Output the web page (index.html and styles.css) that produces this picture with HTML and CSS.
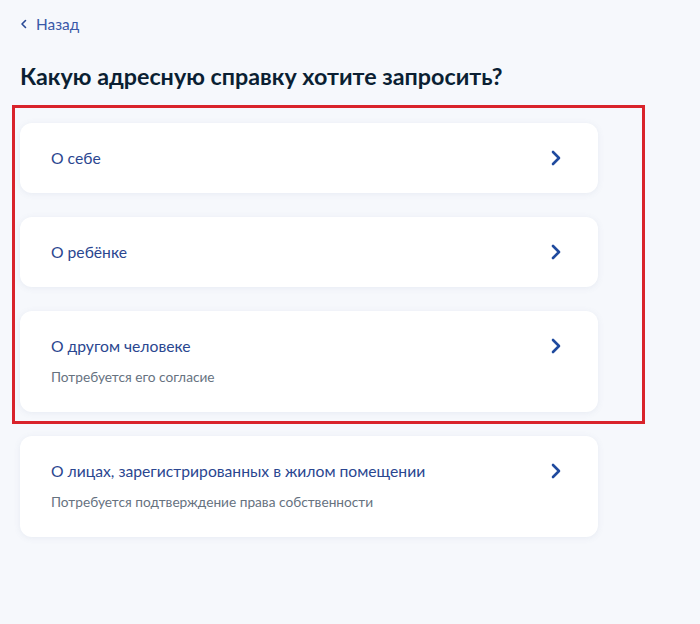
FILE: index.html
```html
<!DOCTYPE html>
<html lang="ru">
<head>
<meta charset="utf-8">
<link rel="stylesheet" href="styles.css">
</head>
<body>
<div class="page">
  <a class="back" href="#">
    <svg class="back-icon" width="8" height="10" viewBox="0 0 8 10"><path d="M5.5 1.5 L2 5 L5.5 8.5" fill="none" stroke="#2a4a96" stroke-width="1.6" stroke-linecap="round" stroke-linejoin="round"/></svg>
    <span>Назад</span>
  </a>
  <h1 class="title">Какую адресную справку хотите запросить?</h1>
  <div class="list">
    <div class="card">
      <div class="card-text"><div class="card-title">О себе</div></div>
      <svg class="chev" width="12" height="16" viewBox="0 0 12 16"><path d="M3 2 L9 8 L3 14" fill="none" stroke="#1f4a9e" stroke-width="2.6" stroke-linecap="round" stroke-linejoin="round"/></svg>
    </div>
    <div class="card">
      <div class="card-text"><div class="card-title">О ребёнке</div></div>
      <svg class="chev" width="12" height="16" viewBox="0 0 12 16"><path d="M3 2 L9 8 L3 14" fill="none" stroke="#1f4a9e" stroke-width="2.6" stroke-linecap="round" stroke-linejoin="round"/></svg>
    </div>
    <div class="card">
      <div class="card-text"><div class="card-title">О другом человеке</div><div class="card-sub">Потребуется его согласие</div></div>
      <svg class="chev" width="12" height="16" viewBox="0 0 12 16"><path d="M3 2 L9 8 L3 14" fill="none" stroke="#1f4a9e" stroke-width="2.6" stroke-linecap="round" stroke-linejoin="round"/></svg>
    </div>
    <div class="card">
      <div class="card-text"><div class="card-title">О лицах, зарегистрированных в жилом помещении</div><div class="card-sub">Потребуется подтверждение права собственности</div></div>
      <svg class="chev" width="12" height="16" viewBox="0 0 12 16"><path d="M3 2 L9 8 L3 14" fill="none" stroke="#1f4a9e" stroke-width="2.6" stroke-linecap="round" stroke-linejoin="round"/></svg>
    </div>
    <div class="highlight"></div>
  </div>
</div>
</body>
</html>
```
FILE: styles.css
```css
html, body {
  margin: 0;
  padding: 0;
}
body {
  background: #f6f8fc;
  font-family: Lato, "Noto Sans", sans-serif;
  width: 700px;
  height: 624px;
  overflow: hidden;
}
.page {
  padding: 14px 0 0 20px;
  width: 578px;
}
.back {
  display: inline-flex;
  align-items: center;
  gap: 8px;
  color: #3a58a8;
  text-decoration: none;
  font-size: 15.4px;
  line-height: 20px;
  margin-left: 0;
  position: relative;
  top: -1px;
}
.title {
  margin: 26px 0 0 0;
  font-size: 23.3px;
  line-height: 30px;
  font-weight: 700;
  color: #0b1f33;
}
.list {
  position: relative;
  margin-top: 32px;
  display: flex;
  flex-direction: column;
  gap: 24px;
}
.card {
  background: #ffffff;
  border-radius: 12px;
  box-shadow: 0 1px 6px rgba(100, 120, 160, 0.10);
  padding: 24px 36px 24px 31px;
  display: flex;
  align-items: flex-start;
  justify-content: space-between;
}
.card-title {
  font-size: 15.7px;
  line-height: 22px;
  color: #2a4690;
}
.card-sub {
  margin-top: 10px;
  margin-bottom: 1px;
  font-size: 13.7px;
  line-height: 20px;
  color: #66727f;
}
.chev {
  margin-top: 3px;
  flex: none;
}
.highlight {
  position: absolute;
  left: -8px;
  top: -18px;
  width: 627px;
  height: 313px;
  border: 3px solid #d9232b;
  pointer-events: none;
}
```
